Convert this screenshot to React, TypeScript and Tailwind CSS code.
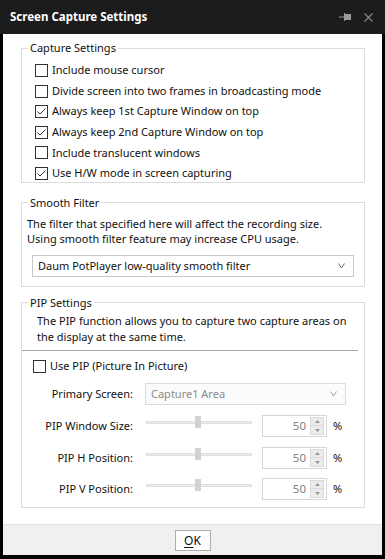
import type { ReactNode } from "react";

function CheckBox({ checked, label }: { checked?: boolean; label: string }) {
  return (
    <div className="flex h-[17px] items-center">
      <span className="flex h-[13px] w-[13px] items-center justify-center border border-[#333333] bg-white">
        {checked ? (
          <svg width="11" height="11" viewBox="0 0 11 11">
            <polyline
              points="1.5,5.5 4,8 9.5,2.5"
              fill="none"
              stroke="#333333"
              strokeWidth="1"
            />
          </svg>
        ) : null}
      </span>
      <span className="ml-[4px] whitespace-nowrap">{label}</span>
    </div>
  );
}

function Chevron({ color = "#6b6b6b" }: { color?: string }) {
  return (
    <svg width="7" height="6" viewBox="0 0 7 6">
      <polyline points="0.5,0.5 3.5,5 6.5,0.5" fill="none" stroke={color} strokeWidth="1" />
    </svg>
  );
}

function Group({
  title,
  className,
  children,
}: {
  title: string;
  className?: string;
  children: ReactNode;
}) {
  return (
    <fieldset className={`border border-[#dcdcdc] ${className ?? ""}`}>
      <legend className="ml-[6px] px-[2px] leading-[16px]">{title}</legend>
      {children}
    </fieldset>
  );
}

function SpinRow({ label, className }: { label: string; className?: string }) {
  return (
    <div className={`flex h-[22px] items-center ${className ?? ""}`}>
      <span className="w-[112px] pr-[1px] text-right">{label}</span>
      {/* slider */}
      <div className="relative ml-[12px] h-[14px] w-[106px] -translate-y-[3px]">
        <div className="absolute top-[5px] left-0 h-[3px] w-full border border-[#e0e0e0] bg-[#ebebeb]" />
        <div className="absolute top-0 left-[49px] h-[12px] w-[6px] bg-[#d2d2d2]" />
      </div>
      {/* spin box */}
      <div className="ml-[10px] flex h-[22px] w-[65px] items-center border border-[#d6d6d6] bg-white">
        <span className="flex-1 pr-[4px] text-right text-[11.5px] text-[#808080]">50</span>
        <div className="mr-[2px] flex h-[18px] w-[14px] flex-col border border-[#dadada] bg-[#ececec]">
          <div className="flex flex-1 items-center justify-center border-b border-[#dadada]">
            <svg width="5" height="3" viewBox="0 0 5 3">
              <polygon points="0,3 2.5,0 5,3" fill="#9a9a9a" />
            </svg>
          </div>
          <div className="flex flex-1 items-center justify-center">
            <svg width="5" height="3" viewBox="0 0 5 3">
              <polygon points="0,0 2.5,3 5,0" fill="#9a9a9a" />
            </svg>
          </div>
        </div>
      </div>
      <span className="ml-[6px]">%</span>
    </div>
  );
}

export default function App() {
  return (
    <div className="flex h-[559px] w-[385px] flex-col bg-black font-['Noto_Sans',sans-serif] text-[11px] text-[#111111]">
      <div className="flex h-[34px] shrink-0 items-center bg-[#1c1c1c] pr-[12px] pl-[10px]">
        <span className="text-[11.5px] font-bold text-white">Screen Capture Settings</span>
        <div className="ml-auto flex items-center gap-[12px]">
          <svg width="13" height="10" viewBox="0 0 13 10">
            <line x1="0" y1="5" x2="5" y2="5" stroke="#9a9a9a" strokeWidth="1" />
            <line x1="5.5" y1="1" x2="5.5" y2="9" stroke="#9a9a9a" strokeWidth="1" />
            <rect x="6" y="2" width="6" height="6" fill="#9a9a9a" />
          </svg>
          <svg width="9" height="9" viewBox="0 0 9 9">
            <path d="M0.5 0.5 L8.5 8.5 M8.5 0.5 L0.5 8.5" stroke="#8a8a8a" strokeWidth="1.1" />
          </svg>
        </div>
      </div>

      <div className="mx-[3px] mb-[4px] flex flex-1 flex-col bg-white">
        <div className="flex-1 pt-[6px] pr-[17px] pl-[18px]">
          <Group title="Capture Settings">
            <div className="flex flex-col gap-[3.6px] pt-[6px] pl-[13px]">
              <CheckBox label="Include mouse cursor" />
              <CheckBox label="Divide screen into two frames in broadcasting mode" />
              <CheckBox checked label="Always keep 1st Capture Window on top" />
              <CheckBox checked label="Always keep 2nd Capture Window on top" />
              <CheckBox label="Include translucent windows" />
              <CheckBox checked label="Use H/W mode in screen capturing" />
            </div>
          </Group>

          <Group title="Smooth Filter" className="mt-[12px] pb-[9px]">
            <p className="pt-[5px] pl-[5px] leading-[15px]">
              The filter that specified here will affect the recording size.
              <br />
              Using smooth filter feature may increase CPU usage.
            </p>
            <div className="mx-[10px] mt-[9px] flex h-[22px] items-center border border-[#c9c9c9] bg-white pr-[8px] pl-[5px]">
              <span className="flex-1">Daum PotPlayer low-quality smooth filter</span>
              <Chevron />
            </div>
          </Group>

          <Group title="PIP Settings" className="mt-[8px] pb-[7px]">
            <p className="pt-[2px] pl-[15px] leading-[16px]">
              The PIP function allows you to capture two capture areas on
              <br />
              the display at the same time.
            </p>
            <div className="mt-[5px] mr-[6px] h-px bg-[#a9a9a9]" />
            <div className="mt-[7px] pl-[11px]">
              <CheckBox label="Use PIP (Picture In Picture)" />
            </div>
            <div className="mt-[8px] flex h-[22px] items-center">
              <span className="w-[112px] pr-[1px] text-right">Primary Screen:</span>
              <div className="ml-[11px] flex h-[22px] w-[201px] items-center border border-[#dcdcdc] bg-[#fbfbfb] pr-[8px] pl-[5px]">
                <span className="flex-1 text-[#8a8a8a]">Capture1 Area</span>
                <Chevron color="#a0a0a0" />
              </div>
            </div>
            <SpinRow label="PIP Window Size:" className="mt-[10px]" />
            <SpinRow label="PIP H Position:" className="mt-[10px]" />
            <SpinRow label="PIP V Position:" className="mt-[9px]" />
          </Group>
        </div>

        <div className="flex h-[31px] shrink-0 justify-center border-t border-[#e2e2e2] bg-[#f0f0f0] pt-[5px]">
          <button
            type="button"
            className="flex h-[21px] w-[36px] items-center justify-center border border-[#adadad] bg-[#fdfdfd] text-[12px]"
          >
            <span className="underline underline-offset-2">O</span>K
          </button>
        </div>
      </div>
    </div>
  );
}
